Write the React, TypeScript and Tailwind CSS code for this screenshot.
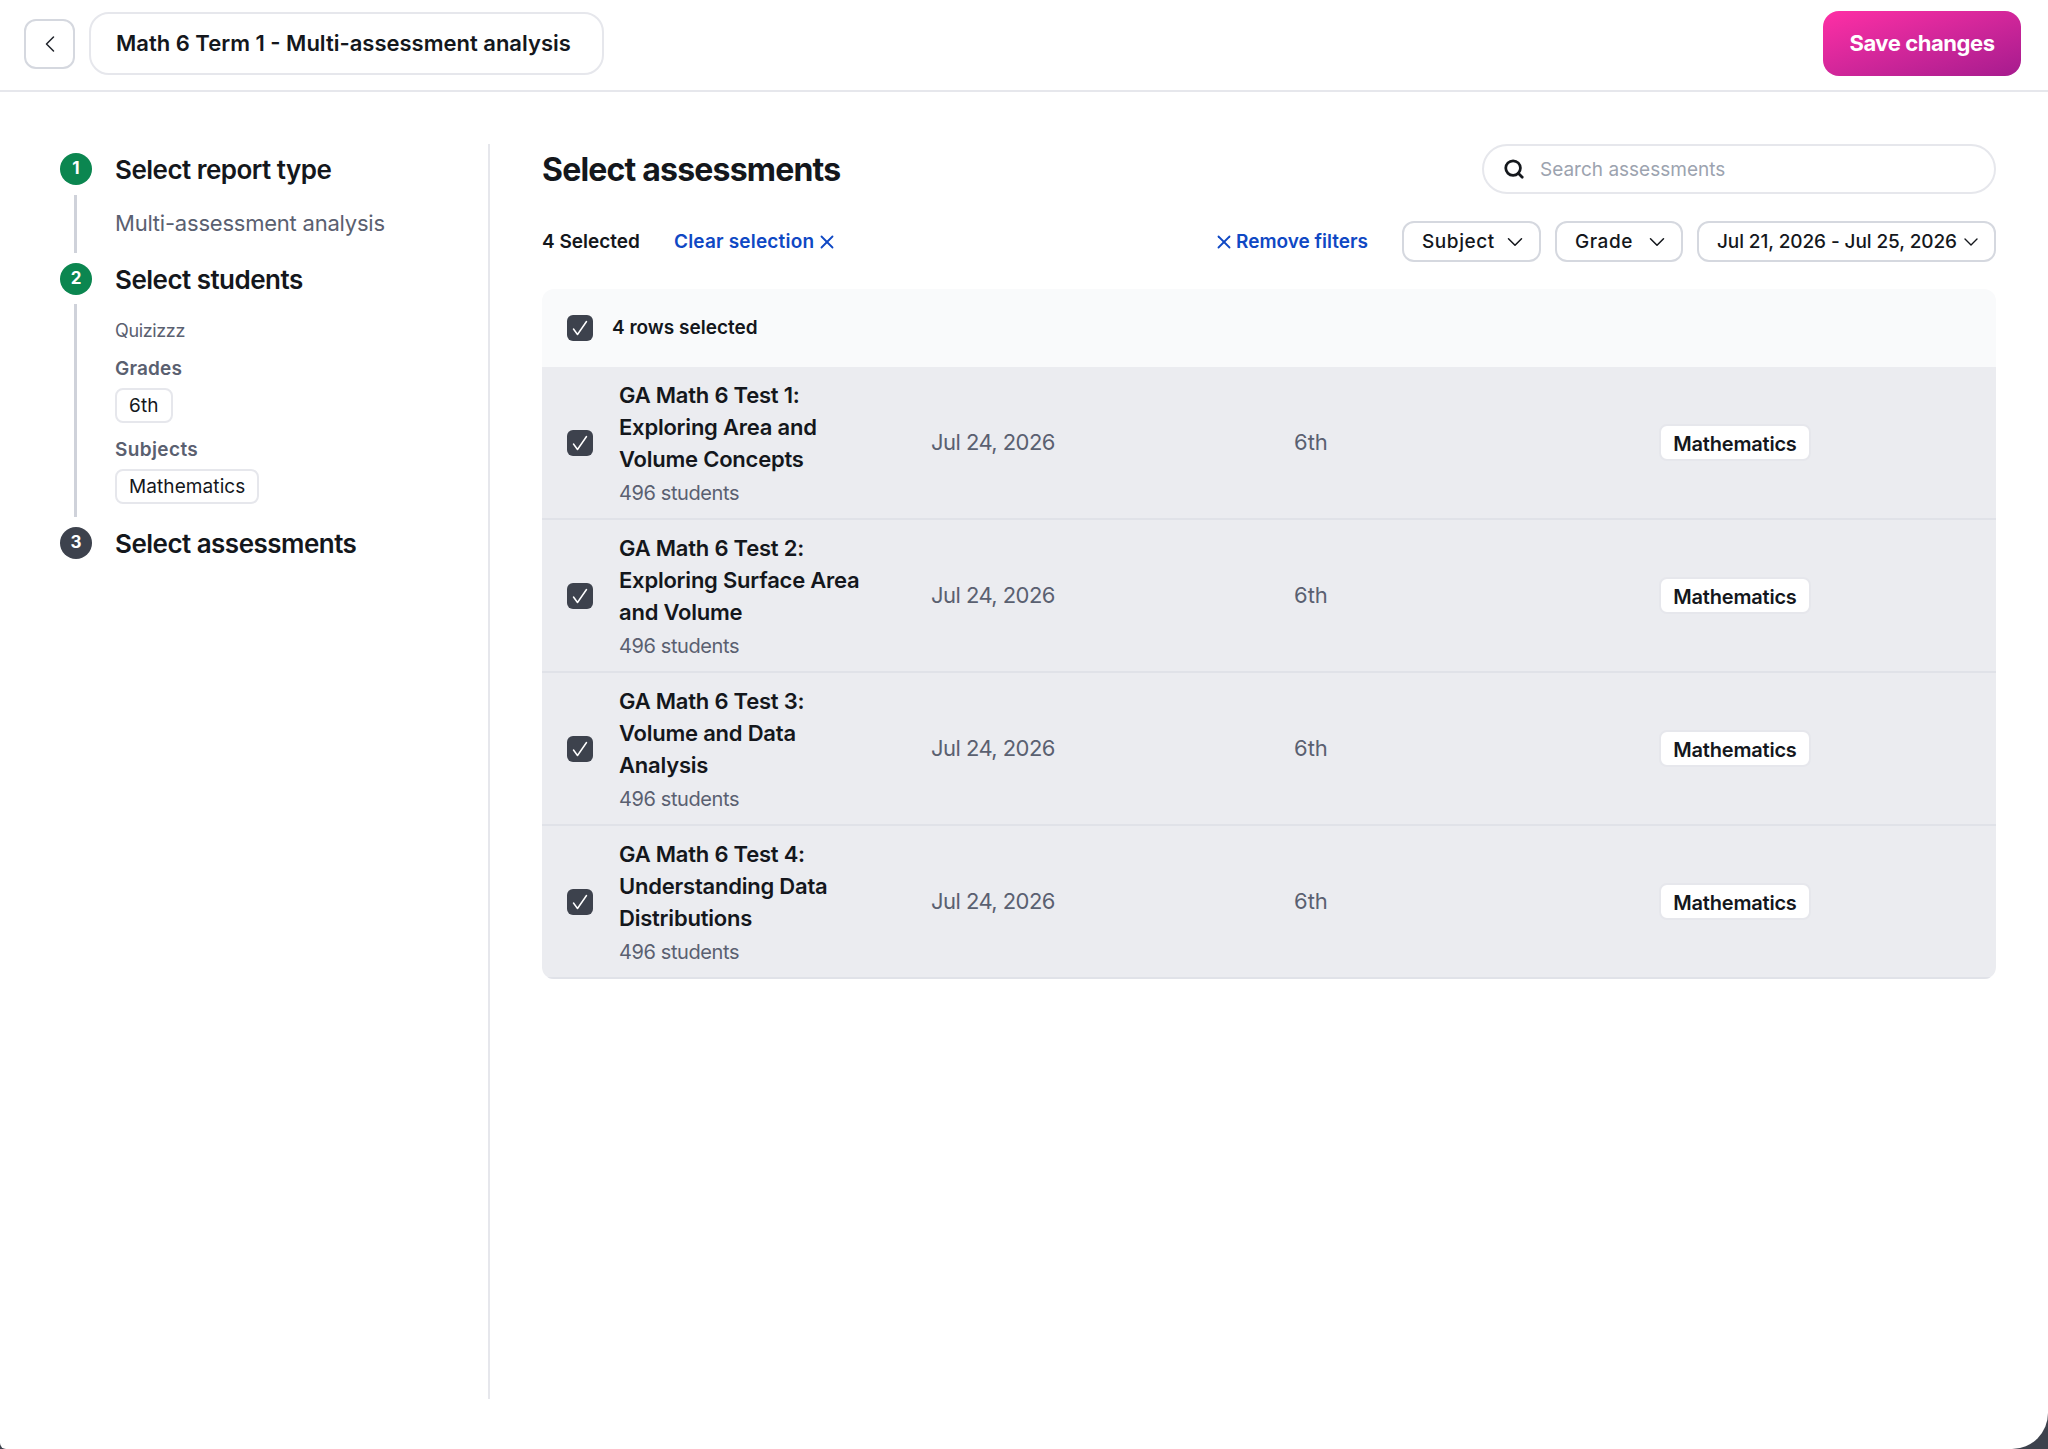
import { ChevronDown, ChevronLeft, Search, X } from 'lucide-react';

const font = { fontFamily: 'Inter, "Noto Sans", sans-serif' };

const ROWS = [
  ['GA Math 6 Test 1:', 'Exploring Area and', 'Volume Concepts'],
  ['GA Math 6 Test 2:', 'Exploring Surface Area', 'and Volume'],
  ['GA Math 6 Test 3:', 'Volume and Data', 'Analysis'],
  ['GA Math 6 Test 4:', 'Understanding Data', 'Distributions'],
];

function Checkbox() {
  return (
    <span className="flex h-[26px] w-[26px] items-center justify-center rounded-[6px] bg-[#3d424d]">
      <svg width="26" height="26" viewBox="0 0 26 26" fill="none">
        <path d="M6.5 14 L10.5 19.5 L19.5 6.5" stroke="white" strokeWidth="1.5" strokeLinecap="round" strokeLinejoin="round" />
      </svg>
    </span>
  );
}

function StepCircle({ n, done }: { n: number; done?: boolean }) {
  return (
    <span
      className={`flex h-8 w-8 shrink-0 items-center justify-center rounded-full text-[17px] font-bold text-white ${
        done ? 'bg-[#0b8650]' : 'bg-[#3d424d]'
      }`}
    >
      {n}
    </span>
  );
}

function StepTitle({ n, done, title }: { n: number; done?: boolean; title: string }) {
  return (
    <div className="flex h-8 items-center gap-[23px]">
      <StepCircle n={n} done={done} />
      <span className="text-[26px] font-semibold tracking-[-0.02em] text-[#14171c]">{title}</span>
    </div>
  );
}

function Chip({ label }: { label: string }) {
  return (
    <span className="inline-flex h-[35px] items-center rounded-[8px] border-2 border-[#e6e7ec] bg-white px-[12px] pt-[2px] text-[19px] tracking-[0.005em] text-[#14171c]">
      {label}
    </span>
  );
}

function FilterButton({
  label,
  width,
  gap,
  spacing,
  icon = 26,
}: {
  label: string;
  width: string;
  gap: string;
  spacing: string;
  icon?: number;
}) {
  return (
    <button
      type="button"
      className={`flex h-[41px] items-center rounded-[12px] border-2 border-[#d5d8df] bg-white pl-[18px] text-[19px] font-medium whitespace-nowrap text-[#14171c] ${width} ${gap}`}
    >
      <span className={`pt-[2px] ${spacing}`}>{label}</span>
      <ChevronDown size={icon} strokeWidth={1.4} />
    </button>
  );
}

export default function App() {
  return (
    <div className="h-[1449px] w-[2048px] bg-[#3d424d]" style={font}>
      <div className="flex h-full flex-col rounded-br-[36px] rounded-bl-[6px] bg-white">
        <header className="flex h-[92px] shrink-0 items-center border-b-2 border-[#e6e7ec] pr-[27px] pb-[3px] pl-[24px]">
          <button
            type="button"
            className="flex h-[50px] w-[51px] items-center justify-center rounded-[12px] border-2 border-[#d5d8df] text-[#22262d]"
          >
            <ChevronLeft size={28} strokeWidth={1.3} />
          </button>
          <div className="ml-[14px] flex h-[63px] w-[515px] items-center rounded-[20px] border-2 border-[#e6e7ec] pl-[25px] text-[22px] font-semibold text-[#14171c]">
            Math 6 Term 1 - Multi-assessment analysis
          </div>
          <button
            type="button"
            className="ml-auto h-[65px] w-[198px] rounded-[16px] bg-linear-to-br from-[#ff2fa5] to-[#a61b8e] text-[22px] font-bold tracking-[-0.02em] text-white"
          >
            Save changes
          </button>
        </header>

        <div className="flex flex-1 pt-[52px] pb-[50px]">
          <aside className="w-[490px] shrink-0 border-r-2 border-[#e6e7ec] pt-[9px] pl-[60px]">
            <StepTitle n={1} done title="Select report type" />
            <div className="mt-[10px] flex h-[58px] gap-[38px]">
              <div className="ml-[14px] w-[3px] bg-[#cfd2da]" />
              <div className="pt-[14px] text-[22px] leading-[28px] tracking-[-0.01em] text-[#5a6070]">
                Multi-assessment analysis
              </div>
            </div>
            <div className="mt-[10px]">
              <StepTitle n={2} done title="Select students" />
            </div>
            <div className="mt-[9px] flex h-[213px] gap-[38px]">
              <div className="ml-[14px] w-[3px] bg-[#cfd2da]" />
              <div className="flex flex-col items-start pt-[15px]">
                <div className="text-[18px] leading-[24px] tracking-[-0.02em] text-[#5a6070]">Quizizzz</div>
                <div className="mt-[14px] text-[19px] leading-[24px] font-semibold tracking-[0.01em] text-[#5a6070]">
                  Grades
                </div>
                <div className="mt-[7px]">
                  <Chip label="6th" />
                </div>
                <div className="mt-[15px] text-[19px] leading-[24px] font-semibold tracking-[0.02em] text-[#5a6070]">
                  Subjects
                </div>
                <div className="mt-[7px]">
                  <Chip label="Mathematics" />
                </div>
              </div>
            </div>
            <div className="mt-[10px]">
              <StepTitle n={3} title="Select assessments" />
            </div>
          </aside>

          <main className="flex-1 pr-[52px] pl-[52px]">
            <div className="flex h-[50px] items-center justify-between">
              <h1 className="pt-[2px] text-[32px] font-bold tracking-[-0.025em] text-[#14171c]">Select assessments</h1>
              <div className="flex h-[50px] w-[514px] items-center gap-[15px] rounded-full border-2 border-[#e6e7ec] pl-[19px] text-[19px] text-[#9ca3af]">
                <Search size={22} strokeWidth={3} className="text-[#14171c]" />
                <span className="pt-[2px]">Search assessments</span>
              </div>
            </div>

            <div className="mt-[27px] flex h-[41px] items-center">
              <span className="pt-[2px] text-[19px] font-semibold text-[#14171c]">4 Selected</span>
              <span className="ml-[34px] flex items-center gap-[2px] text-[19px] font-semibold tracking-[0.01em] text-[#0f48c4]">
                <span className="pt-[2px]">Clear selection</span>
                <X size={22} strokeWidth={2} />
              </span>
              <span className="ml-auto flex items-center gap-px text-[19px] font-semibold text-[#0f48c4]">
                <X size={22} strokeWidth={2} />
                <span className="pt-[2px]">Remove filters</span>
              </span>
              <div className="ml-[34px] flex gap-[14px]">
                <FilterButton label="Subject" width="w-[139px]" gap="gap-[7px]" spacing="tracking-[0.03em]" />
                <FilterButton label="Grade" width="w-[128px]" gap="gap-[11px]" spacing="tracking-[0.03em]" />
                <FilterButton
                  label="Jul 21, 2026 - Jul 25, 2026"
                  width="w-[299px]"
                  gap="gap-[2px]"
                  spacing="tracking-[-0.005em]"
                  icon={24}
                />
              </div>
            </div>

            <div className="mt-[27px] overflow-hidden rounded-[12px]">
              <div className="flex h-[78px] items-center gap-[19px] bg-[#f9fafb] pl-[25px] text-[19px] font-semibold text-[#14171c]">
                <Checkbox />
                4 rows selected
              </div>
              {ROWS.map((lines) => (
                <div
                  key={lines[0]}
                  className="grid h-[153px] grid-cols-[52px_312px_363px_365px_1fr] items-center border-b-2 border-[#e0e2e8] bg-[#ebecf0] pl-[25px]"
                >
                  <Checkbox />
                  <div className="pt-[3px]">
                    {lines.map((line) => (
                      <div
                        key={line}
                        className="text-[22px] leading-[32px] font-semibold tracking-[-0.01em] whitespace-nowrap text-[#14171c]"
                      >
                        {line}
                      </div>
                    ))}
                    <div className="mt-[2px] text-[20px] leading-[32px] tracking-[-0.02em] text-[#5a6070]">496 students</div>
                  </div>
                  <div className="text-[22px] tracking-[-0.025em] text-[#5a6070]">Jul 24, 2026</div>
                  <div className="text-[22px] text-[#5a6070]">6th</div>
                  <div>
                    <span className="inline-flex h-[37px] w-[152px] items-center justify-center rounded-[8px] border-2 border-[#e6e7ec] bg-white pt-[2px] text-[20px] font-semibold tracking-[-0.01em] text-[#14171c]">
                      Mathematics
                    </span>
                  </div>
                </div>
              ))}
            </div>
          </main>
        </div>
      </div>
    </div>
  );
}
